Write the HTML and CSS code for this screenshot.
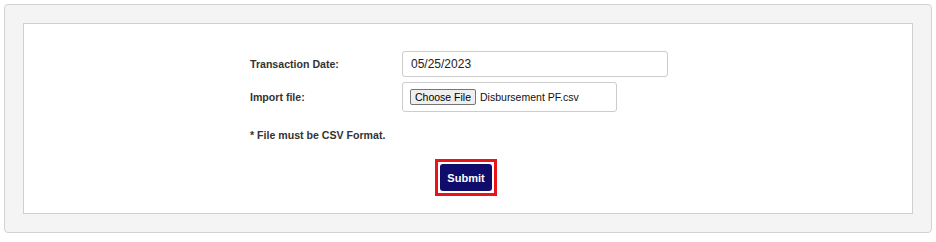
FILE: index.html
```html
<!DOCTYPE html>
<html lang="en">
<head>
<meta charset="utf-8">
<title>Import Disbursement</title>
<link rel="stylesheet" href="styles.css">
</head>
<body>
<div class="panel">
  <div class="card">
    <form class="import-form">
      <div class="fields">
        <label class="field-label" for="txdate">Transaction Date:</label>
        <input class="text-input" id="txdate" type="text" value="05/25/2023">
        <span class="field-label">Import file:</span>
        <div class="file-input">
          <span class="file-button">Choose File</span>
          <span class="file-name">Disbursement PF.csv</span>
        </div>
      </div>
      <p class="note">* File must be CSV Format.</p>
      <div class="actions">
        <span class="focus-ring">
          <button type="button" class="submit-btn">Submit</button>
        </span>
      </div>
    </form>
  </div>
</div>
</body>
</html>
```

FILE: styles.css
```css
* { box-sizing: border-box; }

html, body {
  margin: 0;
  padding: 0;
  background: #ffffff;
}

body {
  padding: 4px;
  font-family: Arial, "Liberation Sans", sans-serif;
  color: #333333;
}

.panel {
  height: 229px;
  padding: 18px;
  background: #f4f4f4;
  border: 1px solid #d2d2d2;
  border-radius: 4px;
}

.card {
  height: 191px;
  background: #ffffff;
  border: 1px solid #d0d0d0;
}

.import-form {
  margin: 0;
  padding-top: 27px;
}

.fields {
  margin-left: 226px;
  display: grid;
  grid-template-columns: 152px auto;
  row-gap: 5px;
  align-items: center;
  justify-content: start;
}

.field-label {
  font-size: 10.6px;
  font-weight: bold;
  color: #333333;
}

.text-input {
  width: 266px;
  height: 26px;
  margin: 0;
  padding: 0 8px;
  border: 1px solid #cccccc;
  border-radius: 3px;
  font-family: Arial, "Liberation Sans", sans-serif;
  font-size: 12px;
  color: #222222;
  background: #ffffff;
  outline: none;
}

.file-input {
  width: 215px;
  height: 30px;
  padding: 0 7px;
  display: flex;
  align-items: center;
  gap: 4px;
  border: 1px solid #cccccc;
  border-radius: 3px;
  font-size: 10.5px;
  color: #111111;
}

.file-button {
  display: inline-block;
  height: 16px;
  line-height: 14px;
  padding: 0 4px;
  border: 1px solid #767676;
  border-radius: 2px;
  background: #efefef;
  color: #000000;
  font-size: 10.5px;
}

.file-name {
  font-size: 10.5px;
  color: #111111;
}

.note {
  margin: 16px 0 0 226px;
  font-size: 10.6px;
  line-height: 14px;
  font-weight: bold;
  color: #333333;
}

.actions {
  margin-top: 17px;
  padding-right: 4px;
  display: flex;
  justify-content: center;
}

.focus-ring {
  display: inline-flex;
  padding: 2px;
  border: 3px solid #e8141a;
}

.submit-btn {
  width: 52px;
  height: 27px;
  padding: 0;
  border: none;
  border-radius: 3px;
  background: #100c6b;
  color: #ffffff;
  font-family: Arial, "Liberation Sans", sans-serif;
  font-size: 11px;
  font-weight: bold;
  cursor: pointer;
}
```
